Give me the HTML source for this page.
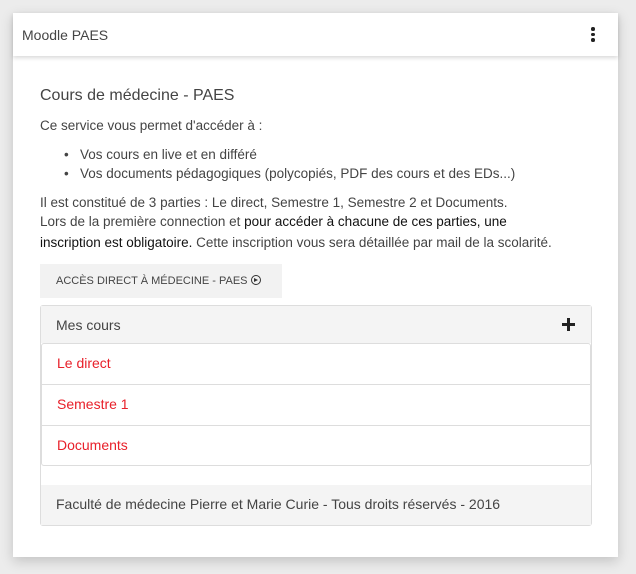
<!DOCTYPE html>
<html><head><meta charset="utf-8"><style>
*{margin:0;padding:0;box-sizing:border-box}
body{width:636px;height:574px;background:#ececec;font-family:"Liberation Sans",sans-serif;color:#333;position:relative;overflow:hidden}
.card{position:absolute;left:13px;top:13px;width:605px;height:544px;background:#fff;box-shadow:0 4px 12px rgba(0,0,0,.18)}
.hdr{height:43px;box-shadow:0 2px 4px rgba(0,0,0,.15);position:relative;font-size:14px;color:#444;padding:14px 0 0 9px}
.dots{position:absolute;right:23px;top:14px;width:4px}
.dots i{display:block;width:3.5px;height:3.5px;background:#222;border-radius:50%;margin-bottom:2px}
.abs{position:absolute;white-space:nowrap}
.t{font-size:13.5px;color:#444}
</style></head><body>
<div class="card">
<div class="hdr">Moodle PAES<div class="dots"><i></i><i></i><i></i></div></div>
</div>
<div class="abs" style="left:40px;top:87px;font-size:16px;color:#444">Cours de médecine - PAES</div>
<div class="abs t" style="left:40px;top:118px">Ce service vous permet d'accéder à :</div>
<div class="abs t" style="left:64px;top:147px">•&nbsp;&nbsp;&nbsp;Vos cours en live et en différé</div>
<div class="abs t" style="left:64px;top:166px">•&nbsp;&nbsp;&nbsp;Vos documents pédagogiques (polycopiés, PDF des cours et des EDs...)</div>
<div class="abs t" style="left:40px;top:195px">Il est constitué de 3 parties : Le direct, Semestre 1, Semestre 2 et Documents.</div>
<div class="abs t" style="left:40px;top:214px">Lors de la première connection et <span style="color:#111">pour accéder à chacune de ces parties, une</span></div>
<div class="abs t" style="left:40px;top:235px"><span style="color:#111">inscription est obligatoire.</span> Cette inscription vous sera détaillée par mail de la scolarité.</div>
<div class="abs" style="left:40px;top:264px;width:242px;height:34px;background:#f2f2f2;font-size:11px;color:#444;padding:11px 0 0 16px">ACCÈS DIRECT À MÉDECINE - PAES <span style="display:inline-block;width:10px;height:10px;border:1.5px solid #333;border-radius:50%;vertical-align:-1px;position:relative"><span style="position:absolute;left:2.5px;top:1.5px;border-left:4px solid #333;border-top:2.5px solid transparent;border-bottom:2.5px solid transparent"></span></span></div>
<div class="abs" style="left:40px;top:305px;width:552px;height:221px;border:1px solid #ddd;border-radius:3px;background:#fff">
 <div style="height:37px;background:#f4f4f4;font-size:14px;color:#444;padding:11px 0 0 15px;position:relative">Mes cours<svg style="position:absolute;right:16px;top:12px" width="13" height="13" viewBox="0 0 13 13"><path d="M5 0h3v5h5v3H8v5H5V8H0V5h5z" fill="#222"/></svg></div>
 <div style="border:1px solid #ddd;border-radius:3px;background:#fff">
  <div style="height:41px;border-bottom:1px solid #ddd;color:#e8202a;font-size:14px;padding:11px 0 0 15px">Le direct</div>
  <div style="height:41px;border-bottom:1px solid #ddd;color:#e8202a;font-size:14px;padding:11px 0 0 15px">Semestre 1</div>
  <div style="height:39px;color:#e8202a;font-size:14px;padding:11px 0 0 15px">Documents</div>
 </div>
 <div style="position:absolute;left:0;right:0;bottom:0;height:40px;background:#f4f4f4;font-size:14px;color:#444;padding:11px 0 0 15px">Faculté de médecine Pierre et Marie Curie - Tous droits réservés - 2016</div>
</div>
</body></html>
